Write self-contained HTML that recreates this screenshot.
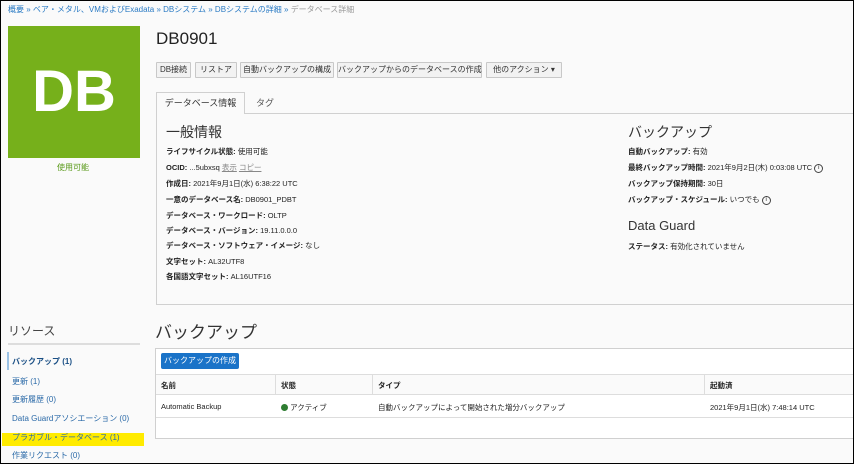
<!DOCTYPE html>
<html><head><meta charset="utf-8"><style>
*{margin:0;padding:0;box-sizing:border-box}
body{width:854px;height:464px;overflow:hidden;background:#fafafa;font-family:"Liberation Sans","Noto Sans CJK JP",sans-serif;color:#222;position:relative}
.frame{position:absolute;left:0;top:0;width:854px;height:464px;border:1px solid #000;pointer-events:none;z-index:9}
.a{position:absolute;white-space:nowrap}
.bc{left:8px;top:4px;font-size:8px;color:#2b7bc4}
.bc span{color:#999}
.logo{left:8px;top:26px;width:132px;height:132px;background:#76b01b;color:#fff;font-weight:bold;font-size:58px;text-align:center;line-height:132px}
.btn{top:62px;height:16px;border:1px solid #c8c8c8;background:#f2f2f2;font-size:8px;line-height:14px;text-align:center;color:#333;border-radius:1px}
.k{font-size:7.5px}
.k b{font-weight:bold}
.lab{font-size:8px;color:#333}
</style></head><body>
<div class="a bc">概要 » ベア・メタル、VMおよびExadata » DBシステム » DBシステムの詳細 » <span>データベース詳細</span></div>
<div class="a logo">DB</div>
<div class="a" style="left:57px;top:162px;font-size:8px;color:#5a9a1a">使用可能</div>
<div class="a" style="left:156px;top:29px;font-size:17px;color:#222">DB0901</div>
<div class="a btn" style="left:156px;width:35px">DB接続</div>
<div class="a btn" style="left:195px;width:42px">リストア</div>
<div class="a btn" style="left:240px;width:94px">自動バックアップの構成</div>
<div class="a btn" style="left:337px;width:145px">バックアップからのデータベースの作成</div>
<div class="a btn" style="left:486px;width:76px">他のアクション ▾</div>
<div class="a" style="left:156px;top:113px;width:698px;height:192px;border:1px solid #d0d0d0;background:#fafafa"></div>
<div class="a" style="left:156px;top:92px;width:89px;height:22px;border:1px solid #d0d0d0;border-bottom:none;background:#fafafa;font-size:9px;line-height:20px;text-align:center;color:#333">データベース情報</div>
<div class="a" style="left:256px;top:96px;font-size:9px;color:#555">タグ</div>
<div class="a" style="left:166px;top:122px;font-size:14px;color:#333">一般情報</div>
<div class="a k" style="left:166px;top:146px"><b>ライフサイクル状態:</b> 使用可能</div>
<div class="a k" style="left:166px;top:162px"><b>OCID:</b> ...5ubxsq <span style="color:#888;text-decoration:underline">表示</span> <span style="color:#888;text-decoration:underline">コピー</span></div>
<div class="a k" style="left:166px;top:178px"><b>作成日:</b> 2021年9月1日(水) 6:38:22 UTC</div>
<div class="a k" style="left:166px;top:194px"><b>一意のデータベース名:</b> DB0901_PDBT</div>
<div class="a k" style="left:166px;top:210px"><b>データベース・ワークロード:</b> OLTP</div>
<div class="a k" style="left:166px;top:225px"><b>データベース・バージョン:</b> 19.11.0.0.0</div>
<div class="a k" style="left:166px;top:240px"><b>データベース・ソフトウェア・イメージ:</b> なし</div>
<div class="a k" style="left:166px;top:256px"><b>文字セット:</b> AL32UTF8</div>
<div class="a k" style="left:166px;top:271px"><b>各国語文字セット:</b> AL16UTF16</div>
<div class="a" style="left:628px;top:122px;font-size:14px;color:#333">バックアップ</div>
<div class="a k" style="left:628px;top:146px"><b>自動バックアップ:</b> 有効</div>
<div class="a k" style="left:628px;top:162px"><b>最終バックアップ時間:</b> 2021年9月2日(木) 0:03:08 UTC <span style="display:inline-block;width:9px;height:9px;border:1px solid #444;border-radius:50%;font-size:6px;line-height:7px;text-align:center;vertical-align:middle">i</span></div>
<div class="a k" style="left:628px;top:178px"><b>バックアップ保持期間:</b> 30日</div>
<div class="a k" style="left:628px;top:194px"><b>バックアップ・スケジュール:</b> いつでも <span style="display:inline-block;width:9px;height:9px;border:1px solid #444;border-radius:50%;font-size:6px;line-height:7px;text-align:center;vertical-align:middle">i</span></div>
<div class="a" style="left:628px;top:218px;font-size:13px;color:#333">Data Guard</div>
<div class="a k" style="left:628px;top:241px"><b>ステータス:</b> 有効化されていません</div>
<div class="a" style="left:8px;top:322px;font-size:12px;color:#444">リソース</div>
<div class="a" style="left:8px;top:343px;width:132px;height:2px;background:#ddd"></div>
<div class="a" style="left:7px;top:352px;width:2px;height:18px;background:#9cc3e6"></div>
<div class="a lab" style="left:12px;top:356px;font-weight:bold;color:#1a4f85">バックアップ (1)</div>
<div class="a" style="left:2px;top:433px;width:142px;height:13px;background:#ffeb00"></div>
<div class="a lab" style="left:12px;top:376px;color:#2b6aa8">更新 (1)</div>
<div class="a lab" style="left:12px;top:394px;color:#2b6aa8">更新履歴 (0)</div>
<div class="a lab" style="left:12px;top:413px;color:#2b6aa8">Data Guardアソシエーション (0)</div>
<div class="a lab" style="left:12px;top:432px;color:#2b6aa8">プラガブル・データベース (1)</div>
<div class="a lab" style="left:12px;top:450px;color:#2b6aa8">作業リクエスト (0)</div>
<div class="a" style="left:155px;top:318px;font-size:17px;color:#333">バックアップ</div>
<div class="a" style="left:155px;top:348px;width:699px;height:91px;border:1px solid #d0d0d0;background:#fff"></div>
<div class="a" style="left:161px;top:353px;width:78px;height:16px;background:#1a73c8;border-radius:2px;color:#fff;font-size:8px;line-height:16px;text-align:center">バックアップの作成</div>
<div class="a" style="left:156px;top:374px;width:698px;height:21px;border-top:1px solid #ddd;border-bottom:1px solid #ddd;background:#fafafa"></div>
<div class="a" style="left:275px;top:375px;width:1px;height:19px;background:#ddd"></div>
<div class="a" style="left:372px;top:375px;width:1px;height:19px;background:#ddd"></div>
<div class="a" style="left:704px;top:375px;width:1px;height:19px;background:#ddd"></div>
<div class="a k" style="left:161px;top:380px;font-weight:bold">名前</div>
<div class="a k" style="left:281px;top:380px;font-weight:bold">状態</div>
<div class="a k" style="left:378px;top:380px;font-weight:bold">タイプ</div>
<div class="a k" style="left:710px;top:380px;font-weight:bold">起動済</div>
<div class="a k" style="left:161px;top:402px">Automatic Backup</div>
<div class="a k" style="left:281px;top:402px"><span style="display:inline-block;width:7px;height:7px;border-radius:50%;background:#2e7d32;vertical-align:-1px"></span> アクティブ</div>
<div class="a k" style="left:378px;top:402px">自動バックアップによって開始された増分バックアップ</div>
<div class="a k" style="left:710px;top:402px">2021年9月1日(水) 7:48:14 UTC</div>
<div class="a" style="left:156px;top:417px;width:698px;height:1px;background:#ddd"></div>
<div class="frame"></div>
</body></html>
